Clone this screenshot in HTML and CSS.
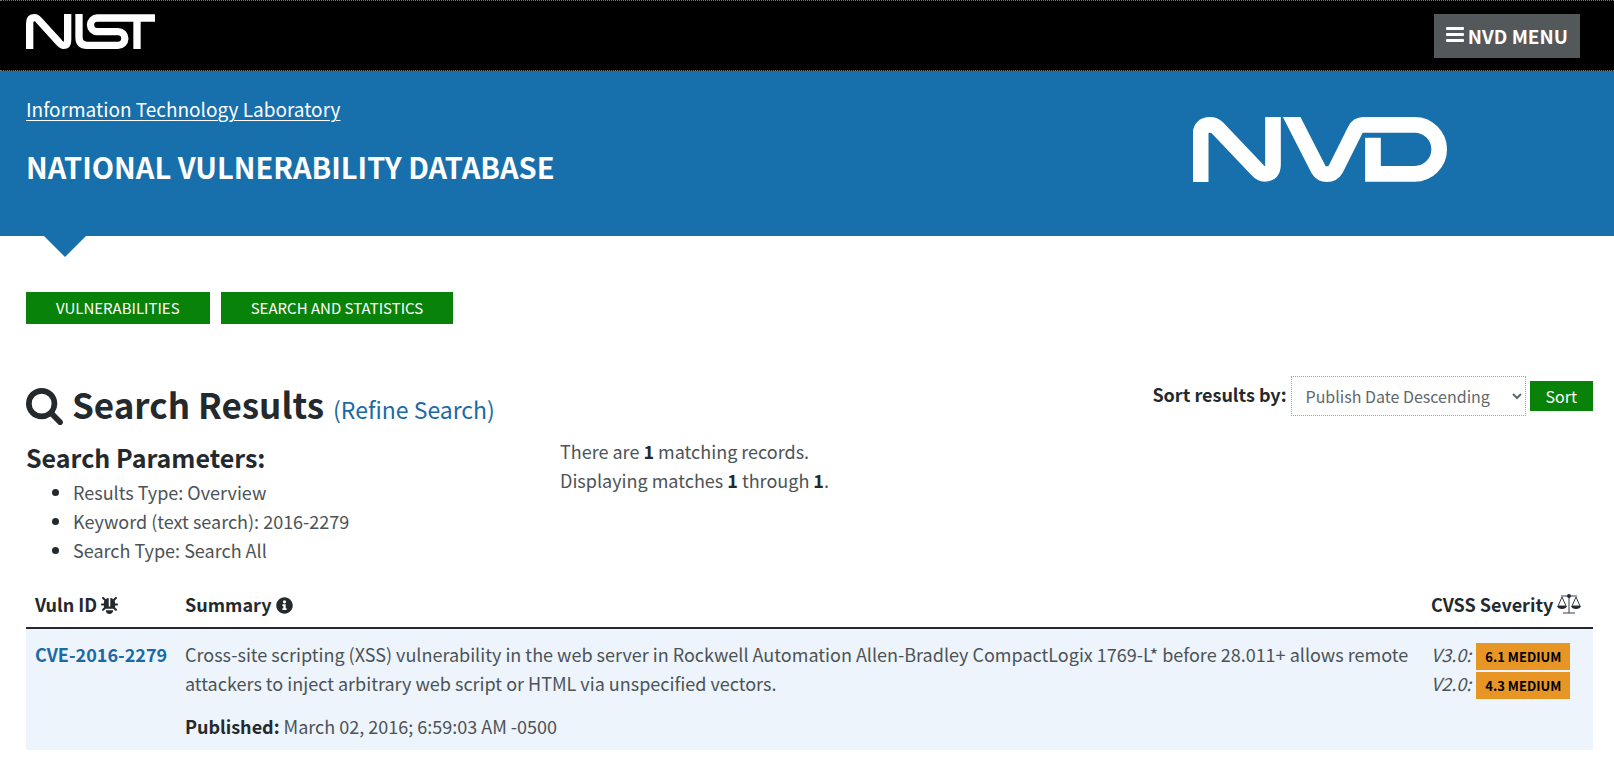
FILE: index.html
```html
<!DOCTYPE html>
<html lang="en">
<head>
<meta charset="utf-8">
<title>NVD - Results</title>
<link rel="stylesheet" href="styles.css">
</head>
<body>
<header class="topbar">
  <a class="nist" href="#" aria-label="NIST">
    <svg class="nist-logo" viewBox="78 42 387 105" fill="none" stroke="#fff" stroke-width="22">
      <path d="M89 148V70Q89 53 104 53Q110 53 117 61L176 126Q184 136 191 136Q203 136 203 120V41"/>
      <path d="M237 41V112Q237 136 261 136H354A20 20 0 0 0 354 95H292A20 20 0 0 1 292 54H466"/>
      <path d="M411 54V148"/>
    </svg>
  </a>
  <button class="menu-btn" type="button">
    <svg class="bars" viewBox="0 0 18 16" fill="#fff"><rect width="18" height="3" rx="1"/><rect y="6" width="18" height="3" rx="1"/><rect y="12" width="18" height="3" rx="1"/></svg>
    NVD MENU
  </button>
</header>
<section class="banner">
  <div class="banner-text">
    <a class="lab" href="#">Information Technology Laboratory</a>
    <h1 class="site-title">NATIONAL VULNERABILITY DATABASE</h1>
  </div>
  <svg class="nvd-logo" viewBox="99 351 762 194" fill="none" stroke="#fff" stroke-width="47" role="img" aria-label="NVD">
    <path d="M122 550V402Q122 374 150 374Q163 374 172 383L291 508Q302 521 314 521Q339 521 339 494V340"/>
    <path d="M385 331L475 507Q484 522 501 522Q518 522 527 507L585 391Q593 374 610 374H764A73 73 0 0 1 764 521H639V413"/>
  </svg>
</section>
<main class="content">
  <nav class="tabs">
    <a class="tab" href="#">VULNERABILITIES</a>
    <a class="tab" href="#">SEARCH AND STATISTICS</a>
  </nav>
  <div class="results-head">
    <h2 class="title">
      <svg class="search-icon" viewBox="64 128 1664 1664"><path d="M1216 832q0-185-131.500-316.500t-316.500-131.500-316.500 131.500-131.500 316.500 131.500 316.500 316.500 131.500 316.500-131.500 131.500-316.500zm512 832q0 52-38 90t-90 38q-54 0-90-38l-343-342q-179 124-399 124-143 0-273.500-55.500t-225-150-150-225-55.500-273.500 55.500-273.500 150-225 225-150 273.500-55.500 273.500 55.500 225 150 150 225 55.500 273.500q0 220-124 399l343 343q37 37 37 90z"/></svg>
      <span>Search Results</span>
      <a class="refine" href="#">(Refine Search)</a>
    </h2>
    <form class="sort">
      <label class="sort-label" for="sort">Sort results by:</label>
      <select class="sort-select" id="sort"><option>Publish Date Descending</option></select>
      <button class="sort-btn" type="button">Sort</button>
    </form>
  </div>
  <div class="summary">
    <div class="params">
      <h3 class="params-title">Search Parameters:</h3>
      <ul class="params-list">
        <li>Results Type: Overview</li>
        <li>Keyword (text search): 2016-2279</li>
        <li>Search Type: Search All</li>
      </ul>
    </div>
    <div class="counts">
      There are <strong>1</strong> matching records.<br>
      Displaying matches <strong>1</strong> through <strong>1</strong>.
    </div>
  </div>
  <table class="vulns">
    <colgroup><col class="col-id"><col><col class="col-cvss"></colgroup>
    <thead>
      <tr>
        <th scope="col">Vuln ID <svg class="icon" viewBox="0 0 512 512"><path d="M511.988 288.900c-.478 17.430-15.217 31.100-32.653 31.100H424v16c0 21.864-4.882 42.584-13.600 61.145l60.228 60.228c12.496 12.497 12.496 32.758 0 45.255-12.498 12.497-32.759 12.496-45.256 0l-54.736-54.736C345.886 467.965 314.351 480 280 480V236c0-6.627-5.373-12-12-12h-24c-6.627 0-12 5.373-12 12v244c-34.351 0-65.886-12.035-90.636-32.108l-54.736 54.736c-12.498 12.497-32.759 12.496-45.256 0-12.496-12.497-12.496-32.758 0-45.255l60.228-60.228C92.882 378.584 88 357.864 88 336v-16H32.666C15.230 320 .491 306.330.013 288.900-.484 270.816 14.028 256 32 256h56v-58.745l-46.628-46.628c-12.496-12.497-12.496-32.758 0-45.255 12.498-12.497 32.758-12.497 45.256 0L141.255 160h229.489l54.627-54.627c12.498-12.497 32.758-12.497 45.256 0 12.496 12.497 12.496 32.758 0 45.255L424 197.255V256h56c17.972 0 32.484 14.816 31.988 32.900zM257 0c-61.856 0-112 50.144-112 112h224C369 50.144 318.856 0 257 0z" transform="rotate(180 256 256)"/></svg></th>
        <th scope="col">Summary <svg class="icon" viewBox="0 0 512 512"><path d="M256 8C119 8 8 119 8 256s111 248 248 248 248-111 248-248S393 8 256 8zm0 90a48 48 0 1 1 0 96 48 48 0 0 1 0-96zm64 280c0 7-5 12-12 12h-104c-7 0-12-5-12-12v-30c0-7 5-12 12-12h16v-64h-16c-7 0-12-5-12-12v-30c0-7 5-12 12-12h76c7 0 12 5 12 12v106h16c7 0 12 5 12 12z"/></svg></th>
        <th scope="col">CVSS Severity <svg class="icon icon-wide" viewBox="0 0 24 20"><path fill="none" stroke="#333e44" stroke-width="1" d="M4 2H20M12 1V19M6 19H18M5 3L1 12H9ZM19 3L15 12H23Z"/><path d="M0 12H10Q9 15 5 15T0 12ZM14 12H24Q23 15 19 15T14 12Z"/><circle cx="12" cy="2" r="2"/></svg></th>
      </tr>
    </thead>
    <tbody>
      <tr>
        <td><a class="cve" href="#">CVE-2016-2279</a></td>
        <td>
          <p class="desc">Cross-site scripting (XSS) vulnerability in the web server in Rockwell Automation Allen-Bradley CompactLogix 1769-L* before 28.011+ allows remote attackers to inject arbitrary web script or HTML via unspecified vectors.</p>
          <p class="desc"><strong>Published:</strong> March 02, 2016; 6:59:03 AM -0500</p>
        </td>
        <td>
          <div class="score"><em>V3.0:</em> <a class="badge" href="#">6.1 MEDIUM</a></div>
          <div class="score"><em>V2.0:</em> <a class="badge" href="#">4.3 MEDIUM</a></div>
        </td>
      </tr>
    </tbody>
  </table>
</main>
</body>
</html>
```
FILE: styles.css
```css
* { box-sizing: border-box; }
body {
  margin: 0;
  background: #fff;
  color: #4c5357;
  font-family: "Noto Sans CJK SC", "Noto Sans", sans-serif;
  font-size: 18px;
  line-height: 29px;
}
h1, h2, h3, p, ul { margin: 0; }
button, select { font-family: inherit; }
strong, th, h2, h3 { color: #23292d; font-weight: 700; }

.topbar {
  display: flex;
  justify-content: space-between;
  align-items: flex-start;
  height: 71px;
  padding: 13px 34px 0 26px;
  background: #000;
  border-top: 1px dotted #71787c;
  border-bottom: 1px dotted #71787c;
}
.nist { display: block; }
.nist-logo { display: block; width: 129px; height: 35px; }
.menu-btn {
  display: flex;
  align-items: center;
  gap: 4px;
  height: 44px;
  padding: 0 12px 2px;
  border: 0;
  background: #53595b;
  color: #fff;
  font-size: 19px;
  font-weight: 700;
}
.bars { width: 18px; height: 16px; }

.banner {
  position: relative;
  display: flex;
  justify-content: space-between;
  height: 165px;
  padding: 23px 167px 0 26px;
  background: #176fab;
  color: #fff;
}
.banner::after {
  content: "";
  position: absolute;
  top: 100%;
  left: 44px;
  border: solid transparent;
  border-width: 21px 21px 0;
  border-top-color: #176fab;
}
.lab { color: #fff; font-size: 19px; text-underline-offset: 3px; text-decoration-thickness: 1px; }
.site-title { margin-top: 22px; font-size: 29px; line-height: 40px; }
.nvd-logo { width: 254px; height: 65px; margin-top: 23px; }

.content { padding: 56px 21px 8px 26px; }
.tabs { display: flex; gap: 11px; }
.tab {
  padding: 0 30px;
  background: #09820a;
  color: #fff;
  font-size: 15px;
  line-height: 32px;
  text-decoration: none;
}
.results-head { display: flex; justify-content: space-between; align-items: flex-start; margin-top: 52px; }
.title { display: flex; align-items: baseline; gap: 9px; font-size: 35px; line-height: 56px; }
.search-icon { width: 37px; height: 37px; align-self: center; fill: #23292d; }
.refine { color: #1b6aa5; font-size: 23px; font-weight: 400; text-decoration: none; }
.sort { display: flex; align-items: center; gap: 4px; }
.sort-label { padding-bottom: 4px; color: #23292d; font-weight: 700; }
.sort-select {
  width: 235px;
  height: 40px;
  padding: 0 10px;
  border: 1px dotted #8ba9ba;
  background: #fff;
  color: #5f686d;
  font-size: 16px;
}
.sort-btn { height: 30px; padding: 0 16px; border: 0; background: #09820a; color: #fff; font-size: 16px; }

.summary { display: grid; grid-template-columns: 534px 1fr; }
.params-title { font-size: 25px; line-height: 41px; }
.params-list { padding-left: 47px; }
.params-list li::marker { color: #23292d; }

.vulns { width: 100%; margin-top: 16px; border-collapse: collapse; table-layout: fixed; }
.col-id { width: 150px; }
.col-cvss { width: 171px; }
.vulns th { padding: 9px 9px 8px; border-bottom: 2px solid #23292d; text-align: left; white-space: nowrap; }
.vulns td { padding: 11px 9px 9px; background: #edf4fb; vertical-align: top; }
.icon { width: 17px; height: 17px; vertical-align: -2px; fill: #23292d; }
.icon-wide { width: 24px; height: 20px; }
.cve { color: #1b6aa5; font-weight: 700; text-decoration: none; white-space: nowrap; }
.desc + .desc { margin-top: 14px; }
.score { display: flex; align-items: flex-start; gap: 5px; height: 29px; }
.badge {
  margin-top: 3px;
  padding: 0 9px;
  background: #e79626;
  color: #000;
  font-size: 13px;
  font-weight: 700;
  line-height: 27px;
  text-decoration: none;
}
```
